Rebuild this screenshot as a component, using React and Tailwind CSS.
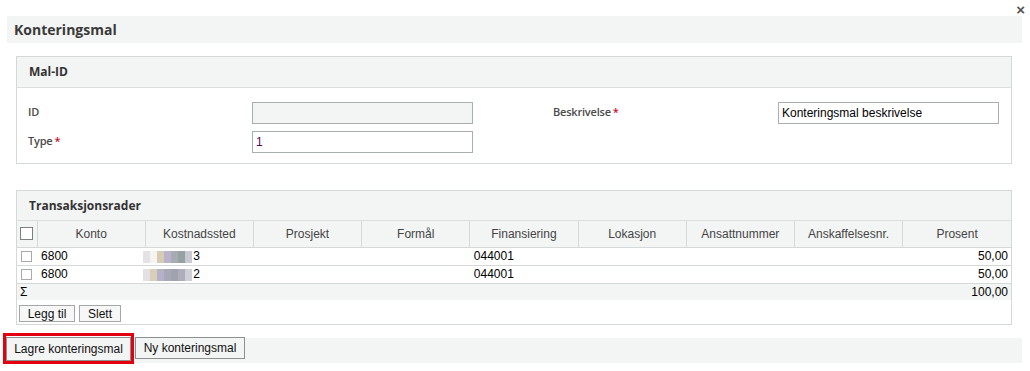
import React from 'react';

// --- data ---
const columns = ['Konto', 'Kostnadssted', 'Prosjekt', 'Formål', 'Finansiering', 'Lokasjon', 'Ansattnummer', 'Anskaffelsesnr.', 'Prosent'];

const rows = [
  { konto: '6800', sted: '3', fin: '044001', prosent: '50,00', mosaic: ['#e4e2e4', '#f6f4f2', '#d6ccb4', '#b9b3cb', '#a9abb3', '#94a2a2', '#c9c9d3'] },
  { konto: '6800', sted: '2', fin: '044001', prosent: '50,00', mosaic: ['#e2e0e2', '#d9cfb9', '#b5b1c9', '#a7a7b5', '#a0a2ad', '#adadbb', '#cfcfd7'] },
];

const Mosaic = ({ colors }) => (
  <span className="inline-flex align-middle -ml-[6px] mr-[1px]">
    {colors.map((c, i) => (
      <span key={i} className="inline-block w-[7px] h-[12px]" style={{ backgroundColor: c }} />
    ))}
  </span>
);

const Label = ({ children, req }) => (
  <span className="text-[11px] font-semibold text-[#4a4a4a] font-['Open_Sans',sans-serif] tracking-[-0.2px]">
    {children}
    {req && <span className="text-[#c8102e] ml-[2px]">*</span>}
  </span>
);

const PanelHeader = ({ children, h }) => (
  <div className={`${h} bg-[#f3f4f4] border-b border-[#dcdfdf] flex items-center pl-[12px] text-[12px] font-bold text-[#333] font-['Open_Sans',sans-serif]`}>
    {children}
  </div>
);

const SmallBtn = ({ children, w }) => (
  <button className={`${w} h-[17px] border border-[#a5a8a8] bg-[#f7f7f7] text-[12px] leading-none text-[#111]`}>{children}</button>
);

export default function App() {
  return (
    <div className="w-[1030px] h-[371px] bg-white relative font-['Liberation_Sans',Arial,sans-serif] overflow-hidden">
      {/* close */}
      <button className="absolute top-[2px] right-[5px] text-[#555] text-[15px] leading-none font-bold">×</button>

      {/* title */}
      <div className="mt-[16px] ml-[7px] w-[1015px] h-[27px] bg-[#f3f4f4] flex items-center pl-[7px]">
        <h1 className="text-[14px] font-bold text-[#3a3a3a] font-['Open_Sans',sans-serif]">Konteringsmal</h1>
      </div>

      {/* Mal-ID */}
      <div className="mt-[13px] ml-[16px] w-[996px] h-[108px] border border-[#d5d8d8]">
        <PanelHeader h="h-[31px]">Mal-ID</PanelHeader>
        <div className="pt-[14px] pl-[11px] flex">
          <div className="flex flex-col gap-[7px]">
            <div className="flex items-center">
              <div className="w-[224px] -mt-[4px]"><Label>ID</Label></div>
              <div className="w-[221px] h-[22px] border border-[#a9aeae] bg-[#f3f4f4]" />
            </div>
            <div className="flex items-center">
              <div className="w-[224px] -mt-[4px]"><Label req>Type</Label></div>
              <div className="w-[221px] h-[22px] border border-[#a9aeae] bg-white flex items-center pl-[3px] text-[12px] text-[#5a0a5a]">1</div>
            </div>
          </div>
          <div className="flex items-center self-start ml-[80px]">
            <div className="w-[225px] -mt-[4px]"><Label req>Beskrivelse</Label></div>
            <div className="w-[221px] h-[22px] border border-[#a9aeae] bg-white flex items-center pl-[3px] text-[12px] text-black">Konteringsmal beskrivelse</div>
          </div>
        </div>
      </div>

      {/* Transaksjonsrader */}
      <div className="mt-[26px] ml-[16px] w-[996px] border border-[#d5d8d8]">
        <PanelHeader h="h-[30px]">Transaksjonsrader</PanelHeader>
        <table className="table-fixed border-collapse w-[994px] text-[12px] leading-[14px]">
          <colgroup>
            <col className="w-[20px]" />
            {columns.map(c => <col key={c} className="w-[108px]" />)}
          </colgroup>
          <thead>
            <tr className="h-[26px] bg-[#f3f4f4] border-b border-[#d5d8d8]">
              <th className="border-r border-[#d5d8d8] p-0">
                <span className="block w-[13px] h-[13px] border border-[#7d8080] bg-white ml-[3px]" />
              </th>
              {columns.map((c, i) => (
                <th key={c} className={`font-normal text-[#444] text-center ${i < columns.length - 1 ? 'border-r border-[#d5d8d8]' : ''}`}>{c}</th>
              ))}
            </tr>
          </thead>
          <tbody>
            {rows.map((r, i) => (
              <tr key={i} className="h-[18px] border-b border-[#d5d8d8] text-black">
                <td className="p-0"><span className="block w-[11px] h-[11px] border border-[#a8abab] ml-[4px]" /></td>
                <td className="px-[4px] py-0">{r.konto}</td>
                <td className="px-[4px] py-0 whitespace-nowrap"><Mosaic colors={r.mosaic} />{r.sted}</td>
                <td />
                <td />
                <td className="px-[4px] py-0">{r.fin}</td>
                <td />
                <td />
                <td />
                <td className="text-right pr-[3px] py-0">{r.prosent}</td>
              </tr>
            ))}
            <tr className="h-[17px] bg-[#f3f4f4]">
              <td className="pl-[3px] py-0">Σ</td>
              <td colSpan={8} />
              <td className="text-right pr-[3px] py-0">100,00</td>
            </tr>
          </tbody>
        </table>
        <div className="flex gap-[4px] pl-[2px] pt-[5px] pb-[2px]">
          <SmallBtn w="w-[56px]">Legg til</SmallBtn>
          <SmallBtn w="w-[42px]">Slett</SmallBtn>
        </div>
      </div>

      {/* footer */}
      <div className="mt-[13px] ml-[7px] w-[1015px] h-[25px] bg-[#f3f4f4] relative">
        <div className="absolute -left-[4px] -top-[5px] flex items-start">
          <div className="border-[3px] border-[#e3000f] p-0">
            <button className="w-[125px] h-[24px] border border-[#8d9090] bg-[#f3f4f4] text-[12px] text-[#111] leading-none">Lagre konteringsmal</button>
          </div>
          <button className="ml-[1px] mt-[4px] w-[110px] h-[22px] border border-[#8d9090] bg-[#f3f4f4] text-[12px] text-[#111] leading-none">Ny konteringsmal</button>
        </div>
      </div>
    </div>
  );
}
